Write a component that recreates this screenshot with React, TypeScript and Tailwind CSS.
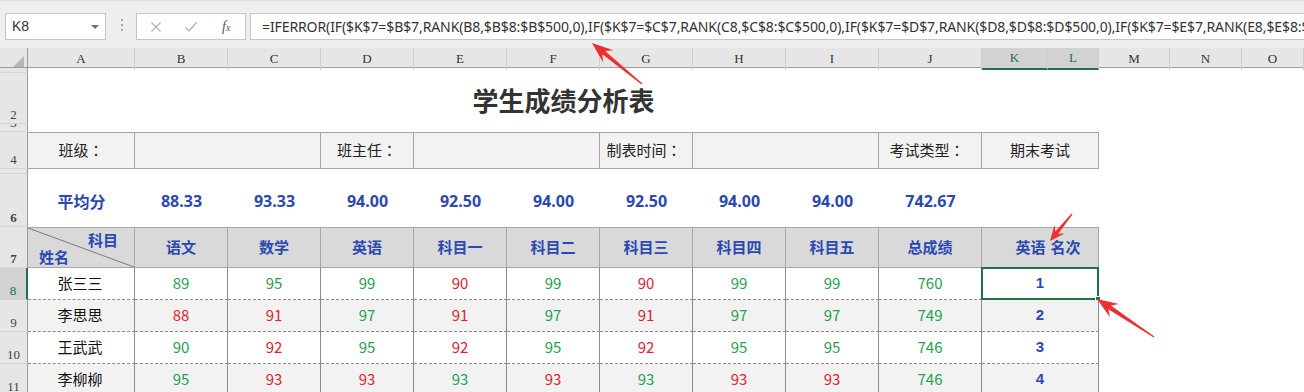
import React from "react";

const COLS =
  "grid grid-cols-[28px_107px_93px_93px_93px_93px_93px_93px_93px_93px_103px_66px_51px_71px_72px_62px]";

const FORMULA =
  "=IFERROR(IF($K$7=$B$7,RANK(B8,$B$8:$B$500,0),IF($K$7=$C$7,RANK(C8,$C$8:$C$500,0),IF($K$7=$D$7,RANK($D8,$D$8:$D$500,0),IF($K$7=$E$7,RANK(E8,$E$8:$E$500,0),IF($K$7=$F$7,RANK(F8,$F$8:$F$500,0),\"\"))))),\"\")";

const letters = ["A", "B", "C", "D", "E", "F", "G", "H", "I", "J", "K", "L", "M", "N", "O"];

const subjects = ["语文", "数学", "英语", "科目一", "科目二", "科目三", "科目四", "科目五", "总成绩"];

const averages = ["88.33", "93.33", "94.00", "92.50", "94.00", "92.50", "94.00", "94.00", "742.67"];

type Score = [number, "g" | "r"];

const students: { name: string; scores: Score[]; rank: number }[] = [
  {
    name: "张三三",
    scores: [[89, "g"], [95, "g"], [99, "g"], [90, "r"], [99, "g"], [90, "r"], [99, "g"], [99, "g"], [760, "g"]],
    rank: 1
  },
  {
    name: "李思思",
    scores: [[88, "r"], [91, "r"], [97, "g"], [91, "r"], [97, "g"], [91, "r"], [97, "g"], [97, "g"], [749, "g"]],
    rank: 2
  },
  {
    name: "王武武",
    scores: [[90, "g"], [92, "r"], [95, "g"], [92, "r"], [95, "g"], [92, "r"], [95, "g"], [95, "g"], [746, "g"]],
    rank: 3
  },
  {
    name: "李柳柳",
    scores: [[95, "g"], [93, "r"], [93, "r"], [93, "g"], [93, "r"], [93, "g"], [93, "r"], [93, "r"], [746, "g"]],
    rank: 4
  }
];

function RowHead({ n, active = false }: { n: number; active?: boolean }) {
  return (
    <div
      className={`flex items-end justify-center overflow-hidden border-b border-[#d5d5d5] font-['Liberation_Serif',serif] text-[13px] leading-[15px] ${
        active
          ? "border-r-2 border-r-[#217346] bg-[#d2d2d2] text-[#217346]"
          : "border-r border-r-[#9b9b9b] bg-[#e6e6e6] text-[#444]"
      }`}
    >
      <span className="pb-[1px]">{n}</span>
    </div>
  );
}

// label ending in a centred full-width colon, as the sheet font draws it
function Label({ text }: { text: string }) {
  return (
    <>
      {text}
      <span className="font-['Noto_Sans_CJK_JP',sans-serif]">：</span>
    </>
  );
}

function arrowPoints(tx: number, ty: number, px: number, py: number, head: number, wing: number, shaft: number) {
  const dx = px - tx;
  const dy = py - ty;
  const len = Math.hypot(dx, dy);
  const ux = dx / len;
  const uy = dy / len;
  const nx = -uy;
  const ny = ux;
  const bx = px - ux * head;
  const by = py - uy * head;
  const cx = px - ux * head * 0.72;
  const cy = py - uy * head * 0.72;
  const pts = [
    [tx + nx * 0.6, ty + ny * 0.6],
    [cx + nx * shaft, cy + ny * shaft],
    [bx + nx * wing, by + ny * wing],
    [px, py],
    [bx - nx * wing, by - ny * wing],
    [cx - nx * shaft, cy - ny * shaft],
    [tx - nx * 0.6, ty - ny * 0.6]
  ];
  return pts.map((p) => p.join(",")).join(" ");
}

const blue = "text-[#2c48b2]";
const cellBorder = "border-r border-b border-[#a6a6a6]";
const infoCell = `flex items-center justify-center border-t bg-[#f2f2f2] ${cellBorder}`;

export default function App() {
  return (
    <div className="relative h-[392px] w-[1304px] overflow-hidden bg-white font-['Noto_Sans_CJK_SC',sans-serif]">
      {/* formula bar */}
      <div className="flex h-[48px] items-start border-t border-[#dedede] bg-[#efefef] pt-[12px]">
        <div className="ml-[5px] flex h-[27px] w-[101px] items-center justify-between border border-[#c6c6c6] bg-white pl-[6px] pr-[6px]">
          <span className="font-['Liberation_Sans',sans-serif] text-[14px] text-[#333]">K8</span>
          <span className="h-0 w-0 border-x-[4px] border-t-[4px] border-x-transparent border-t-[#707070]" />
        </div>
        <div className="ml-[15px] mt-[6px] flex flex-col gap-[3px]">
          <span className="h-[2px] w-[2px] bg-[#a8a8a8]" />
          <span className="h-[2px] w-[2px] bg-[#a8a8a8]" />
          <span className="h-[2px] w-[2px] bg-[#a8a8a8]" />
        </div>
        <div className="ml-[13px] flex h-[27px] w-[110px] items-center border border-[#c6c6c6] bg-white">
          <svg width="12" height="12" viewBox="0 0 12 12" className="ml-[13px]">
            <path d="M1.5 1.5 L10.5 10.5 M10.5 1.5 L1.5 10.5" stroke="#b4b4b4" strokeWidth="1.3" />
          </svg>
          <svg width="14" height="12" viewBox="0 0 14 12" className="ml-[22px]">
            <path d="M1.5 6.5 L5 10 L12.5 1.5" stroke="#b4b4b4" strokeWidth="1.4" fill="none" />
          </svg>
          <span className="ml-[24px] font-['Liberation_Serif',serif] text-[14px] italic text-[#555]">
            f<span className="text-[10px]">x</span>
          </span>
        </div>
        <div className="ml-[4px] flex h-[27px] flex-1 items-center overflow-hidden whitespace-nowrap border border-r-0 border-[#c6c6c6] bg-white pl-[11px]">
          <span className="font-['Noto_Sans',sans-serif] text-[14px] tracking-[-0.1px] text-[#333]">{FORMULA}</span>
        </div>
      </div>

      {/* column headings */}
      <div className={`${COLS} h-[20px] border-b border-[#9b9b9b] bg-[#e6e6e6]`}>
        <div className="relative border-r border-[#9b9b9b]">
          <span className="absolute bottom-[3px] right-[3px] h-0 w-0 border-b-[11px] border-l-[11px] border-b-[#b5b5b5] border-l-transparent" />
        </div>
        {letters.map((l) => {
          const sel = l === "K" || l === "L";
          return (
            <div
              key={l}
              className={`flex items-center justify-center border-r border-[#cfcfcf] font-['Liberation_Serif',serif] text-[13px] ${
                sel ? "border-b-2 border-b-[#217346] bg-[#d2d2d2] text-[#217346]" : "text-[#333]"
              }`}
            >
              {l}
            </div>
          );
        })}
      </div>

      {/* row 1 */}
      <div className={`${COLS} h-[5px]`}>
        <RowHead n={1} />
        <div className="col-span-15" />
      </div>

      {/* row 2: title */}
      <div className={`${COLS} h-[51px]`}>
        <RowHead n={2} />
        <div className="col-span-12 flex items-center justify-center pt-[2px] text-[26px] font-bold text-[#333]">
          学生成绩分析表
        </div>
        <div className="col-span-3" />
      </div>

      {/* row 3 */}
      <div className={`${COLS} h-[8px]`}>
        <RowHead n={3} />
        <div className="col-span-15" />
      </div>

      {/* row 4: info */}
      <div className={`${COLS} h-[37px] text-[15px] text-[#222]`}>
        <RowHead n={4} />
        <div className={infoCell}>
          <Label text="班级" />
        </div>
        <div className={`col-span-2 ${infoCell}`} />
        <div className={infoCell}>
          <Label text="班主任" />
        </div>
        <div className={`col-span-2 ${infoCell}`} />
        <div className={`${infoCell} pr-[4px]`}>
          <Label text="制表时间" />
        </div>
        <div className={`col-span-2 ${infoCell}`} />
        <div className={`${infoCell} pr-[6px]`}>
          <Label text="考试类型" />
        </div>
        <div className={`col-span-2 ${infoCell}`}>期末考试</div>
        <div className="col-span-3" />
      </div>

      {/* row 5 */}
      <div className={`${COLS} h-[5px]`}>
        <RowHead n={5} />
        <div className="col-span-15" />
      </div>

      {/* row 6: averages */}
      <div className={`${COLS} h-[53px] text-[16px] font-bold ${blue}`}>
        <RowHead n={6} />
        <div className="flex items-center justify-center">平均分</div>
        {averages.map((a, i) => (
          <div key={i} className="flex items-center justify-center font-['Noto_Sans',sans-serif]">
            {a}
          </div>
        ))}
        <div className="col-span-5" />
      </div>

      {/* row 7: subject header */}
      <div className={`${COLS} h-[41px] text-[15px] font-bold ${blue}`}>
        <RowHead n={7} />
        <div className={`relative border-t bg-[#d9d9d9] ${cellBorder}`}>
          <svg className="absolute inset-0 h-full w-full" preserveAspectRatio="none" viewBox="0 0 100 100">
            <line x1="0" y1="0" x2="100" y2="100" stroke="#7a7a7a" strokeWidth="1" vectorEffect="non-scaling-stroke" />
          </svg>
          <span className="absolute left-[60px] top-[1px]">科目</span>
          <span className="absolute bottom-[-1px] left-[11px]">姓名</span>
        </div>
        {subjects.map((s) => (
          <div key={s} className={`flex items-center justify-center border-t bg-[#d9d9d9] ${cellBorder}`}>
            {s}
          </div>
        ))}
        <div className={`col-span-2 flex items-center justify-center gap-[5px] border-t bg-[#d9d9d9] pl-[16px] ${cellBorder}`}>
          <span>英语</span>
          <span>名次</span>
        </div>
        <div className="col-span-3" />
      </div>

      {/* rows 8-11: scores */}
      {students.map((st, r) => {
        const bg = r % 2 === 1 ? "bg-[#f2f2f2]" : "bg-white";
        const dash = "border-r border-b border-[#8c8c8c] [border-bottom-style:dashed]";
        return (
          <div key={st.name} className={`${COLS} h-[32px] text-[15px]`}>
            <RowHead n={8 + r} active={r === 0} />
            <div className={`flex items-center justify-center pr-[2px] text-[#111] ${bg} ${dash}`}>{st.name}</div>
            {st.scores.map(([v, c], i) => (
              <div
                key={i}
                className={`flex items-center justify-center ${bg} ${dash} ${
                  c === "g" ? "text-[#26a050]" : "text-[#e0222c]"
                }`}
              >
                {v}
              </div>
            ))}
            <div
              className={`relative col-span-2 flex items-center justify-center font-['Liberation_Sans',sans-serif] font-bold ${blue} ${bg} ${dash}`}
            >
              {st.rank}
              {r === 0 && (
                <>
                  <span className="absolute -left-[1px] -top-[1px] bottom-[-1px] right-[-1px] border-2 border-[#217346]" />
                  <span className="absolute bottom-[-3px] right-[-3px] h-[6px] w-[6px] border border-white bg-[#217346]" />
                </>
              )}
            </div>
            <div className="col-span-3" />
          </div>
        );
      })}

      {/* annotation arrows */}
      <svg className="pointer-events-none absolute left-0 top-0" width="1304" height="392">
        <polygon points={arrowPoints(642, 84, 592, 43, 21, 8, 2.2)} fill="#ec2f2f" />
        <polygon points={arrowPoints(1072, 214, 1050, 241, 15, 6.5, 1.8)} fill="#ec2f2f" />
        <polygon points={arrowPoints(1154, 337, 1097, 299, 21, 8, 2.2)} fill="#ec2f2f" />
      </svg>
    </div>
  );
}
